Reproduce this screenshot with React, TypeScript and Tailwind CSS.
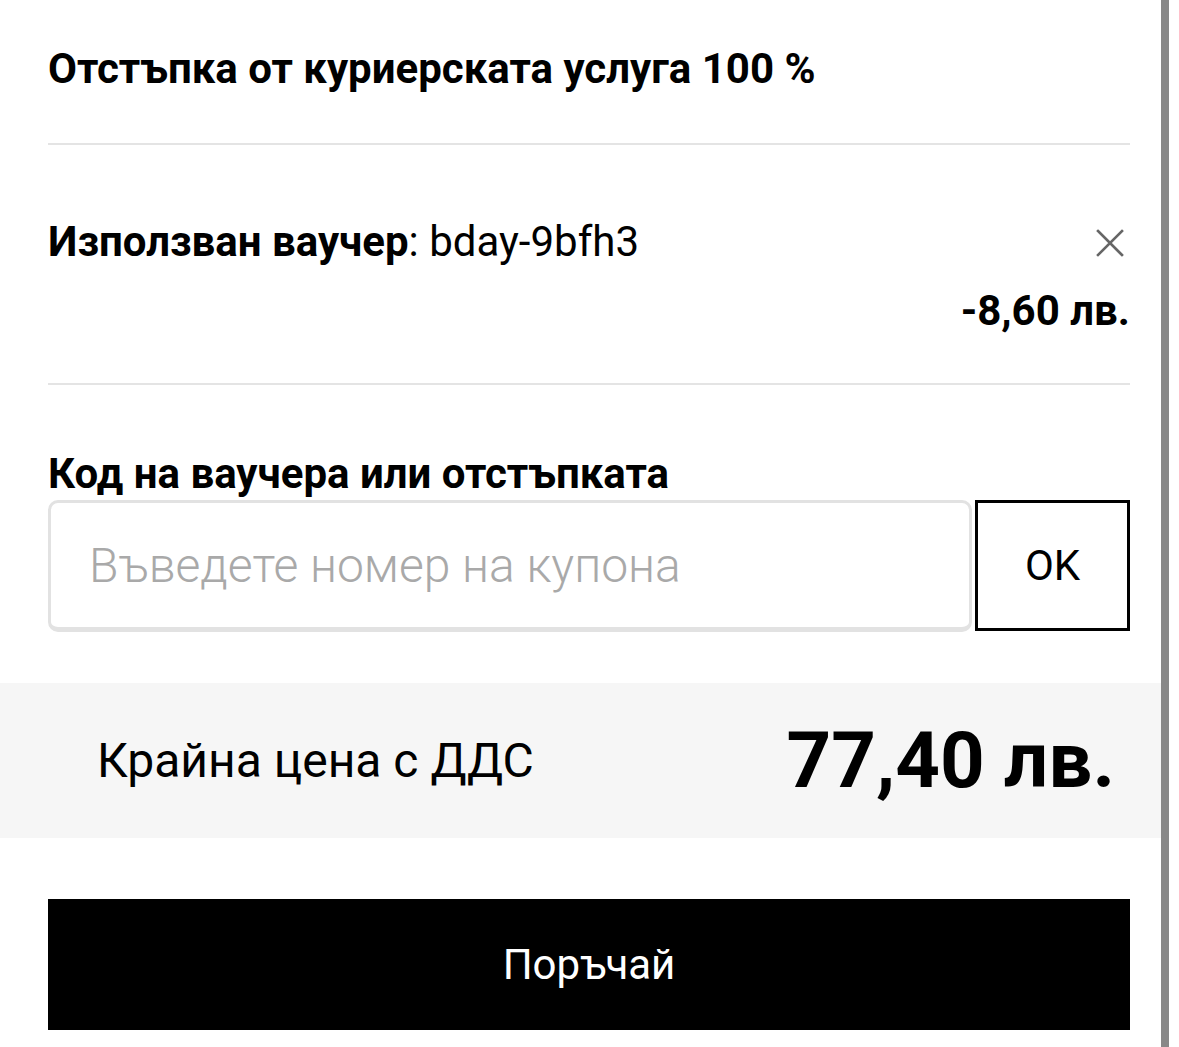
const font = { fontFamily: "Roboto, 'Noto Sans', sans-serif" };

function Divider() {
  return <div className="h-[2px] bg-[#e4e4e4]" />;
}

function CloseIcon() {
  return (
    <svg width="28" height="28" viewBox="0 0 28 28" fill="none" stroke="#666" strokeWidth="2.6" strokeLinecap="square">
      <path d="M2 2L26 26M26 2L2 26" />
    </svg>
  );
}

export default function App() {
  return (
    <div className="flex min-h-[1047px] w-[1179px] bg-white text-black" style={font}>
      <main className="flex w-[1161px] flex-col">
        <div className="pl-[48px] pr-[31px]">
          <h2 className="pt-[45px] pb-[50px] text-[42px] font-bold leading-[48px]">
            Отстъпка от куриерската услуга 100 %
          </h2>
          <Divider />
          <div className="pt-[73px] pb-[48px]">
            <div className="flex items-center justify-between">
              <p className="text-[42px] leading-[48px]">
                <span className="font-bold">Използван ваучер</span>: bday-9bfh3
              </p>
              <button className="mr-[6px] mt-[2px]">
                <CloseIcon />
              </button>
            </div>
            <p className="mt-[21px] text-right text-[42px] font-bold leading-[48px]">-8,60 лв.</p>
          </div>
          <Divider />
          <h3 className="pt-[65px] text-[42px] font-bold leading-[48px]">Код на ваучера или отстъпката</h3>
          <div className="mt-[2px] flex gap-[3px]">
            <input
              className="h-[132px] flex-1 rounded-[10px] border-[3px] border-b-[5px] border-[#e2e2e2] bg-white px-[38px] text-[48px] font-light placeholder:text-[#a9a9a9] outline-none"
              placeholder="Въведете номер на купона"
            />
            <button className="h-[131px] w-[155px] border-[3px] border-black bg-white text-[42px] leading-none">
              OK
            </button>
          </div>
        </div>
        <div className="mt-[51px] flex h-[155px] items-center justify-between bg-[#f6f6f6] pl-[97px] pr-[46px]">
          <span className="text-[48px] leading-none">Крайна цена с ДДС</span>
          <span className="text-[78px] font-bold leading-none">77,40 лв.</span>
        </div>
        <div className="px-[48px] pr-[31px] pt-[61px]">
          <button className="flex h-[131px] w-full items-center justify-center bg-black text-[42px] text-white">
            Поръчай
          </button>
        </div>
      </main>
      <div className="w-[8px] bg-[#888]" />
      <div className="flex-1" />
    </div>
  );
}
